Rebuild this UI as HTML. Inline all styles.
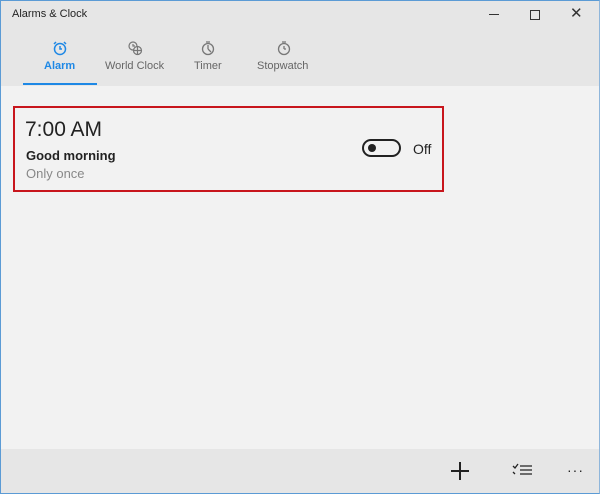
<!DOCTYPE html>
<html><head><style>
body{margin:0;width:600px;height:494px;overflow:hidden;font-family:"Liberation Sans",sans-serif;background:#f2f2f2;position:relative}
.win{position:absolute;left:0;top:0;width:598px;height:492px;border:1px solid #5b9bd5;border-right-color:#8fb6db}
.hdr{position:absolute;left:1px;top:1px;width:598px;height:85px;background:#e6e6e6}
.t{position:absolute;font-size:12px;color:#222}
.tab{position:absolute;top:58px;font-size:11px;color:#666;text-align:center}
.card{position:absolute;left:13px;top:106px;width:427px;height:82px;border:2px solid #c8161d}
.bot{position:absolute;left:1px;top:449px;width:598px;height:44px;background:#e6e6e6}
</style></head><body>
<div class="hdr"></div>
<div class="t" style="left:12px;top:8px;font-size:11px">Alarms &amp; Clock</div>
<div style="position:absolute;left:489px;top:14px;width:10px;height:1px;background:#333"></div>
<div style="position:absolute;left:530px;top:10px;width:8px;height:8px;border:1px solid #333"></div>
<div style="position:absolute;left:570px;top:4px;font-size:15px;color:#333">✕</div>
<svg style="position:absolute;left:52px;top:40px" width="16" height="16" viewBox="0 0 16 16" fill="none" stroke="#1e88e5" stroke-width="1.5"><circle cx="8" cy="9" r="5.5"/><path d="M8 6v3h2M2 4l2-2M14 4l-2-2"/></svg>
<svg style="position:absolute;left:127px;top:40px" width="16" height="16" viewBox="0 0 16 16" fill="none" stroke="#777" stroke-width="1.2"><circle cx="6" cy="6" r="4"/><path d="M6 4v2h2"/><circle cx="10.5" cy="10.5" r="4" fill="#e6e6e6"/><path d="M6.5 10.5h8M10.5 6.5v8"/></svg>
<svg style="position:absolute;left:200px;top:40px" width="16" height="16" viewBox="0 0 16 16" fill="none" stroke="#777" stroke-width="1.3"><circle cx="8" cy="9" r="5.5"/><path d="M6 2h4M8 9V5M8 9l3 3"/></svg>
<svg style="position:absolute;left:276px;top:40px" width="16" height="16" viewBox="0 0 16 16" fill="none" stroke="#777" stroke-width="1.3"><circle cx="8" cy="9" r="5.5"/><path d="M6 2h4M8 3.5v0M8 9V6M8 9h2"/></svg>
<div class="tab" style="left:44px;top:60px;color:#1e88e5;font-weight:bold">Alarm</div>
<div class="tab" style="left:105px;top:60px">World Clock</div>
<div class="tab" style="left:194px;top:60px">Timer</div>
<div class="tab" style="left:257px;top:60px">Stopwatch</div>
<div style="position:absolute;left:23px;top:83px;width:74px;height:2px;background:#1e88e5"></div>
<div class="card"></div>
<div class="t" style="left:25px;top:118px;font-size:21px;color:#222">7:00 AM</div>
<div class="t" style="left:26px;top:148px;font-size:13px;font-weight:bold">Good morning</div>
<div class="t" style="left:26px;top:166px;font-size:13px;color:#888">Only once</div>
<div style="position:absolute;left:362px;top:139px;width:39px;height:18px;border:2px solid #222;border-radius:10px;box-sizing:border-box"></div>
<div style="position:absolute;left:368px;top:144px;width:8px;height:8px;border-radius:50%;background:#222"></div>
<div class="t" style="left:413px;top:141px;font-size:14px">Off</div>
<div class="bot"></div>
<div style="position:absolute;left:451px;top:470px;width:18px;height:1.5px;background:#222"></div>
<div style="position:absolute;left:459px;top:462px;width:1.5px;height:18px;background:#222"></div>
<svg style="position:absolute;left:512px;top:462px" width="22" height="16" viewBox="0 0 22 16" stroke="#222" stroke-width="1.3" fill="none"><path d="M1 4l2 2 3-4M8 4h12M8 8h12M8 12h12M1 10l2 2"/></svg>
<div class="t" style="left:567px;top:462px;font-size:14px;letter-spacing:1px">···</div>
<div class="win"></div>
</body></html>
